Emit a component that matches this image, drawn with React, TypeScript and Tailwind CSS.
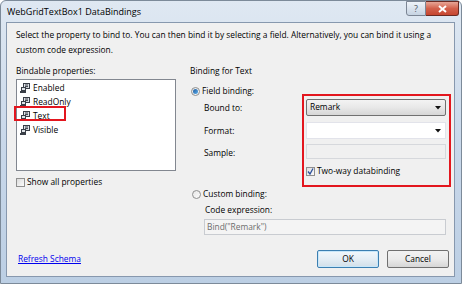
import React from "react";

const font = { fontFamily: '"Open Sans", "Noto Sans", sans-serif' };

function PropIcon() {
  return (
    <svg width="10" height="10" viewBox="0 0 10 10" className="shrink-0">
      <rect x="3.5" y="0.5" width="6" height="5" fill="#dfe3e8" stroke="#3a3f47" />
      <line x1="5" y1="2" x2="8" y2="2" stroke="#3a3f47" />
      <line x1="5" y1="3.6" x2="8" y2="3.6" stroke="#3a3f47" />
      <rect x="1.5" y="4.5" width="4" height="3" fill="#dfe3e8" stroke="#3a3f47" />
      <rect x="0" y="8" width="6" height="2" fill="#3a3f47" />
    </svg>
  );
}

function Arrow() {
  return (
    <svg width="6" height="4" viewBox="0 0 6 4" className="shrink-0">
      <polygon points="0,0 6,0 3,3.5" fill="#111" />
    </svg>
  );
}

function Radio({ checked }: { checked?: boolean }) {
  return (
    <div className="w-[9px] h-[9px] rounded-full border border-[#8e8f8f] bg-gradient-to-br from-[#e6e6e6] to-[#fbfbfb] flex items-center justify-center shrink-0">
      {checked && (
        <div className="w-[5px] h-[5px] rounded-full bg-gradient-to-br from-[#1e5b9e] to-[#5fb0ec]" />
      )}
    </div>
  );
}

function Check({ checked }: { checked?: boolean }) {
  return (
    <div className="w-[9px] h-[9px] border border-[#8f8f8f] bg-gradient-to-br from-[#dcdcdc] to-[#fbfbfb] flex items-center justify-center shrink-0">
      {checked && (
        <svg width="7" height="7" viewBox="0 0 7 7">
          <polyline points="1,3.5 3,6 6,0.5" fill="none" stroke="#2a4f9a" strokeWidth="1.3" />
        </svg>
      )}
    </div>
  );
}

export default function App() {
  const items = ["Enabled", "ReadOnly", "Text", "Visible"];
  return (
    <div className="w-[462px] h-[284px] bg-white text-[8.4px] text-black" style={font}>
      <div className="w-[462px] h-[284px] flex flex-col rounded-t-[6px] border border-[#7c8a99] bg-gradient-to-b from-[#dfe8f2] via-[#c9d8ea] to-[#bccfe4]">
        {/* Title bar */}
        <div className="h-[21px] flex items-start shrink-0">
          <span className="ml-[6px] mt-[4px] text-[9px] leading-[14px] text-black">
            WebGridTextBox1 DataBindings
          </span>
          <div className="ml-auto mr-[2px] flex">
            <div className="w-[20px] h-[15px] border border-[#7b8594] rounded-bl-[3px] bg-gradient-to-b from-[#eef3f9] to-[#c6d3e2] flex items-center justify-center text-[9px] leading-none text-[#4c5663]">
              ?
            </div>
            <div className="w-[33px] h-[15px] border border-[#6b2a22] border-l-0 rounded-br-[3px] bg-gradient-to-b from-[#e6a596] via-[#d2604b] to-[#c6452f] flex items-center justify-center">
              <svg width="9" height="8" viewBox="0 0 9 8">
                <path d="M1 1 L8 7 M8 1 L1 7" stroke="#ffffff" strokeWidth="2" />
              </svg>
            </div>
          </div>
        </div>

        {/* Client area */}
        <div className="ml-[5px] mr-[6px] h-[255px] shrink-0 border border-[#8798ae] bg-[#f0f0f0] flex flex-col">
          <div className="pl-[9px] pt-[4px] leading-[15px]">
            <div>Select the property to bind to. You can then bind it by selecting a field. Alternatively, you can bind it using a</div>
            <div>custom code expression.</div>
          </div>

          <div className="flex pl-[9px] mt-[6px]">
            {/* Left column */}
            <div className="w-[160px] flex flex-col">
              <div className="h-[15px] leading-[15px]">Bindable properties:</div>
              <div className="relative mt-[1px] h-[92px] border border-[#828790] bg-white pt-[0.5px]">
                {items.map((it) => (
                  <div key={it} className="h-[14px] flex items-center pl-[3px] gap-[3px] leading-[14px]">
                    <PropIcon />
                    <span>{it}</span>
                  </div>
                ))}
                <div className="absolute left-[-3px] top-[26px] w-[52px] h-[15px] border-2 border-[#e3161e]" />
              </div>
              <div className="mt-[4px] h-[15px] flex items-center gap-[2px]">
                <Check />
                <span>Show all properties</span>
              </div>
            </div>

            {/* Right column */}
            <div className="ml-[14px] w-[262px] flex flex-col">
              <div className="h-[15px] leading-[15px]">Binding for Text</div>
              <div className="mt-[6px] h-[15px] flex items-center pl-[1px] gap-[2px]">
                <Radio checked />
                <span>Field binding:</span>
              </div>
              <div className="-mt-[5px] flex">
                <div className="ml-[14px] w-[98px] flex flex-col">
                  <div className="mt-[6px] h-[15px] leading-[15px]">Bound to:</div>
                  <div className="mt-[8px] h-[15px] leading-[15px]">Format:</div>
                  <div className="mt-[7px] h-[15px] leading-[15px]">Sample:</div>
                </div>
                <div className="w-[149px] border-2 border-[#e3161e] pl-[2px] pr-[3px] pt-[3px] pb-[6px] flex flex-col">
                  <div className="h-[17px] rounded-[2px] border border-[#707070] bg-gradient-to-b from-[#f3f3f3] via-[#e8e8e8] to-[#d6d6d6] flex items-center pl-[3px] pr-[4px]">
                    <span className="flex-1">Remark</span>
                    <Arrow />
                  </div>
                  <div className="mt-[6px] h-[17px] border border-[#e2e3ea] bg-white flex items-center justify-end pr-[4px]">
                    <Arrow />
                  </div>
                  <div className="mt-[5px] h-[15px] border border-[#d6d8dc] bg-[#f0f0f0]" />
                  <div className="mt-[5px] h-[15px] flex items-center gap-[2px]">
                    <Check checked />
                    <span>Two-way databinding</span>
                  </div>
                </div>
              </div>
              <div className="h-[15px] flex items-center pl-[2px] gap-[2px]">
                <Radio />
                <span>Custom binding:</span>
              </div>
              <div className="ml-[15px] h-[15px] leading-[15px]">Code expression:</div>
              <div className="ml-[14px] mt-[2px] w-[242px] h-[16px] border border-[#c9ccd1] bg-[#f4f4f4] flex items-center pl-[2px] text-[#6d6d6d]">
                Bind("Remark")
              </div>
            </div>
          </div>

          {/* Bottom */}
          <div className="mt-auto pb-[8px] flex items-center">
            <span className="ml-[11px] text-[#0000ee] underline">Refresh Schema</span>
            <div className="ml-auto mr-[5px] flex gap-[8px]">
              <div className="w-[62px] h-[18px] rounded-[2px] border border-[#3c7fb1] bg-gradient-to-b from-[#f2f8fc] via-[#e5eef5] to-[#d2dfe9] shadow-[inset_0_0_0_1px_#c8e7fa] flex items-center justify-center">
                OK
              </div>
              <div className="w-[62px] h-[18px] rounded-[2px] border border-[#707070] bg-gradient-to-b from-[#f2f2f2] via-[#ebebeb] to-[#d6d6d6] flex items-center justify-center">
                Cancel
              </div>
            </div>
          </div>
        </div>
      </div>
    </div>
  );
}
